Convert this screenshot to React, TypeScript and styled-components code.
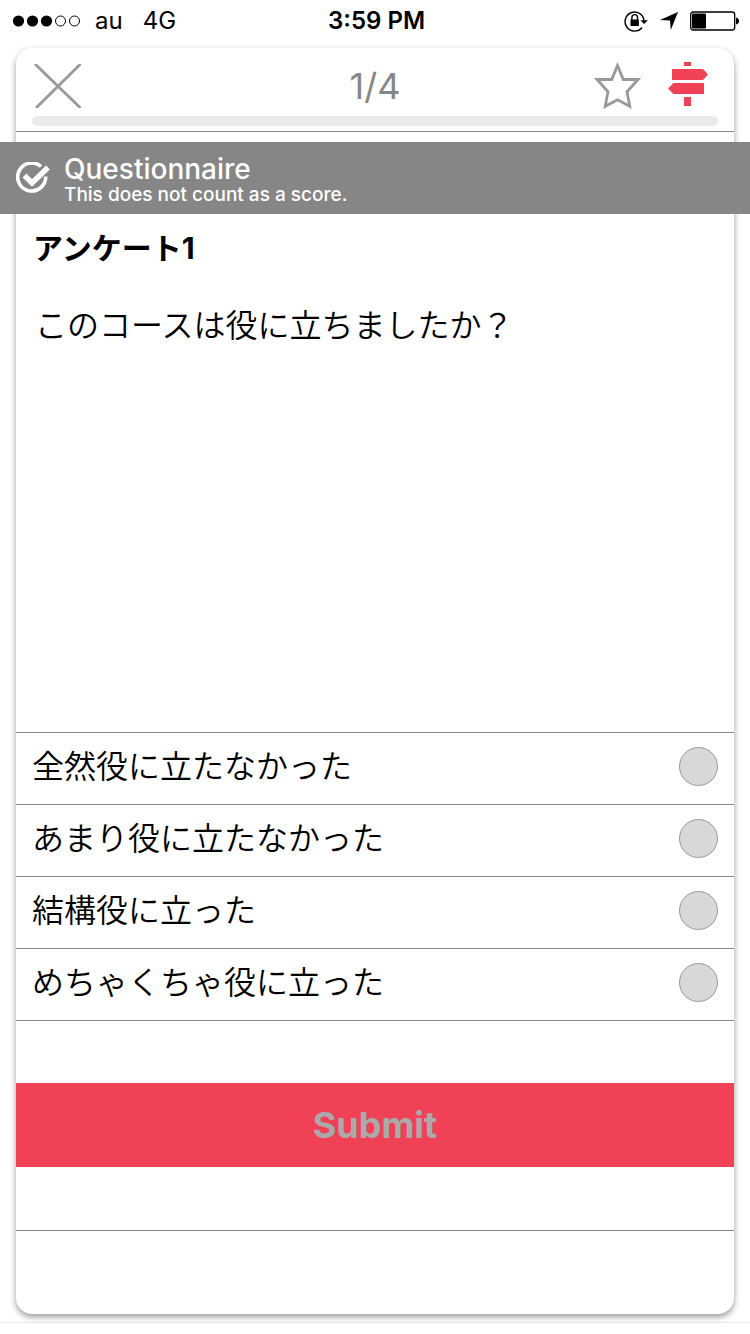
import React from "react";
import styled, { createGlobalStyle } from "styled-components";

const gray = "#868686";
const red = "#f14156";

const GlobalStyle = createGlobalStyle`
  * { box-sizing: border-box; }
  body {
    margin: 0;
    background: #fff;
    color: #000;
    font-family: Inter, "Noto Sans CJK JP", sans-serif;
  }
  button { font-family: inherit; cursor: pointer; }
`;

const Screen = styled.div`
  display: flex;
  flex-direction: column;
  min-height: 100vh;
`;

const StatusBar = styled.div`
  display: grid;
  grid-template-columns: 1fr auto 1fr;
  align-items: center;
  height: 42px;
  padding: 0 11px 0 12px;
  font-size: 24px;
  line-height: 32px;
`;

const StatusGroup = styled.div<{ $end?: boolean }>`
  display: flex;
  align-items: center;
  gap: ${(p) => (p.$end ? "12px" : "0")};
  justify-content: ${(p) => (p.$end ? "flex-end" : "flex-start")};
`;

const Carrier = styled.span`
  margin: 0 20px 0 13px;
`;

const Clock = styled.time`
  padding-left: 2px;
  font-weight: 600;
`;

const CardArea = styled.div`
  flex: 1;
  display: flex;
  flex-direction: column;
  padding: 6px 16px 8px;
  border-bottom: 1px solid #e8e8e8;
  margin-bottom: 11px;
`;

const Card = styled.main`
  flex: 1;
  display: flex;
  flex-direction: column;
  background: #fff;
  border-radius: 16px;
  box-shadow: 0 3px 6px rgba(0, 0, 0, 0.4);
`;

const Header = styled.header`
  padding: 0 16px 5px;
  border-bottom: 1px solid ${gray};
`;

const Toolbar = styled.div`
  display: grid;
  grid-template-columns: 1fr auto 1fr;
  align-items: center;
  height: 68px;
  padding: 8px 10px 0 2px;
`;

const Tools = styled.div`
  display: flex;
  justify-content: flex-end;
  gap: 27px;
`;

const IconButton = styled.button`
  display: flex;
  justify-self: start;
  padding: 0;
  border: 0;
  background: none;
`;

const Counter = styled.span`
  padding-left: 8px;
  color: ${gray};
  font-size: 36px;
  font-weight: 400;
  line-height: 44px;
`;

const Progress = styled.div`
  height: 10px;
  border-radius: 5px;
  background: #ebebeb;
`;

const Banner = styled.section`
  display: flex;
  align-items: center;
  gap: 14px;
  height: 72px;
  margin: 10px -16px 0;
  padding: 2px 16px 0;
  background: ${gray};
  color: #fff;
`;

const BannerTitle = styled.h1`
  margin: 0;
  font-size: 28px;
  font-weight: 500;
  line-height: 32px;
`;

const BannerNote = styled.p`
  margin: 0;
  font-size: 19px;
  font-weight: 500;
  line-height: 20px;
`;

const Question = styled.section`
  flex: 1;
  padding: 14px 17px;
`;

const QuestionTitle = styled.h2`
  margin: 0 0 38px;
  font-size: 30px;
  font-weight: 700;
  line-height: 40px;
`;

const QuestionText = styled.p`
  margin: 0;
  padding-left: 2px;
  font-size: 32px;
  font-weight: 350;
  line-height: 40px;
`;

const Options = styled.fieldset`
  min-width: 0;
  margin: 0;
  padding: 0;
  border: 0;
  border-top: 1px solid ${gray};
`;

const Option = styled.label`
  display: flex;
  align-items: center;
  justify-content: space-between;
  height: 72px;
  padding: 0 16px 4px;
  border-bottom: 1px solid ${gray};
  font-size: 32px;
  font-weight: 350;
  line-height: 40px;
  cursor: pointer;
`;

const Radio = styled.input`
  appearance: none;
  flex: none;
  width: 39px;
  height: 39px;
  margin: 0;
  border: 1px solid #999;
  border-radius: 50%;
  background: #d8d8d8;
  &:checked { background: ${red}; }
`;

const Actions = styled.div`
  padding: 62px 0 63px;
  border-bottom: 1px solid ${gray};
`;

const Submit = styled.button`
  display: block;
  width: 100%;
  height: 84px;
  padding: 0;
  border: 0;
  background: ${red};
  color: #aaa;
  font-size: 36px;
  font-weight: 700;
`;

const CardFoot = styled.div`
  height: 83px;
`;

const SignalDots = () => (
  <svg width="70" height="14" viewBox="0 0 70 14">
    {[6.5, 20.5, 34.5].map((x) => (
      <circle key={x} cx={x} cy="7" r="5.6" />
    ))}
    {[48.5, 62.5].map((x) => (
      <circle key={x} cx={x} cy="7" r="5" fill="none" stroke="#000" />
    ))}
  </svg>
);

const LockIcon = () => (
  <svg width="24" height="22" viewBox="0 0 24 22">
    <path d="M18 17.500A9.500 9.500 0 1 1 20 10.500" fill="none" stroke="#000" strokeWidth="1.4" />
    <path d="M16.500 10.300H24L20 14z" />
    <path d="M6.500 9.500h8.400V16H6.500z" />
    <path d="M7.900 10V7.400a2.800 2.800 0 0 1 5.600 0V10" fill="none" stroke="#000" strokeWidth="1.4" />
  </svg>
);

const LocationIcon = () => (
  <svg width="18" height="19" viewBox="0 0 18 19">
    <path d="M18 0 10.800 18 10 8.600 0 8z" />
  </svg>
);

const BatteryIcon = () => (
  <svg width="49" height="20" viewBox="0 0 49 20">
    <rect x=".7" y="1" width="44" height="18" rx="2.5" fill="none" stroke="#000" strokeWidth="1.3" />
    <rect x="2" y="2.5" width="14" height="15" rx="1" />
    <path d="M46 6.500c2 .5 3 1.600 3 3.500s-1 3-3 3.500z" />
  </svg>
);

const CloseIcon = () => (
  <svg width="48" height="44" viewBox="0 0 48 44" fill="none" stroke="#999" strokeWidth="2.8">
    <path d="M1 0 46.500 44M46.500 0 2 44" />
  </svg>
);

const StarIcon = () => (
  <svg width="48" height="48" viewBox="0 0 48 48" fill="none" stroke="#999" strokeWidth="2.8">
    <path d="M24.500 3.500 30.300 17.500H45L34 29.700 36.800 44.300 24.500 37.800 12.200 44.300 15 29.700 4 17.500H18.700z" />
  </svg>
);

const SignpostIcon = () => (
  <svg width="40" height="48" viewBox="0 0 40 48" fill={red}>
    <path d="M16 0h7v4h-7zM4 7h31l5 5.500-5 5.500H4zM36 21H5.500L0 26.500 5.500 32H36zM16 35h7v9h-7z" />
  </svg>
);

const CheckCircleIcon = () => (
  <svg width="34" height="34" viewBox="0 0 34 34" fill="none" stroke="#fff">
    <path d="M25 4.500A14 14 0 1 0 29.700 14.500" strokeWidth="3.6" />
    <path d="M8.500 13.500 16 21 32 5.500" strokeWidth="5.4" />
  </svg>
);

const choices = [
  "全然役に立たなかった",
  "あまり役に立たなかった",
  "結構役に立った",
  "めちゃくちゃ役に立った",
];

export default function App() {
  return (
    <Screen lang="ja">
      <GlobalStyle />
      <StatusBar>
        <StatusGroup>
          <SignalDots />
          <Carrier>au</Carrier>
          <span>4G</span>
        </StatusGroup>
        <Clock>3:59 PM</Clock>
        <StatusGroup $end>
          <LockIcon />
          <LocationIcon />
          <BatteryIcon />
        </StatusGroup>
      </StatusBar>
      <CardArea>
        <Card>
          <Header>
            <Toolbar>
              <IconButton type="button" aria-label="Close">
                <CloseIcon />
              </IconButton>
              <Counter>1/4</Counter>
              <Tools>
                <IconButton type="button" aria-label="Favorite">
                  <StarIcon />
                </IconButton>
                <IconButton type="button" aria-label="Guide">
                  <SignpostIcon />
                </IconButton>
              </Tools>
            </Toolbar>
            <Progress role="progressbar" aria-label="Progress" aria-valuenow={0} aria-valuemin={0} aria-valuemax={4} />
          </Header>
          <Banner>
            <CheckCircleIcon />
            <div>
              <BannerTitle>Questionnaire</BannerTitle>
              <BannerNote>This does not count as a score.</BannerNote>
            </div>
          </Banner>
          <Question>
            <QuestionTitle>アンケート1</QuestionTitle>
            <QuestionText id="question">このコースは役に立ちましたか？</QuestionText>
          </Question>
          <Options aria-labelledby="question">
            {choices.map((choice, i) => (
              <Option key={choice}>
                {choice}
                <Radio type="radio" name="answer" value={i} />
              </Option>
            ))}
          </Options>
          <Actions>
            <Submit type="submit">Submit</Submit>
          </Actions>
          <CardFoot />
        </Card>
      </CardArea>
    </Screen>
  );
}
